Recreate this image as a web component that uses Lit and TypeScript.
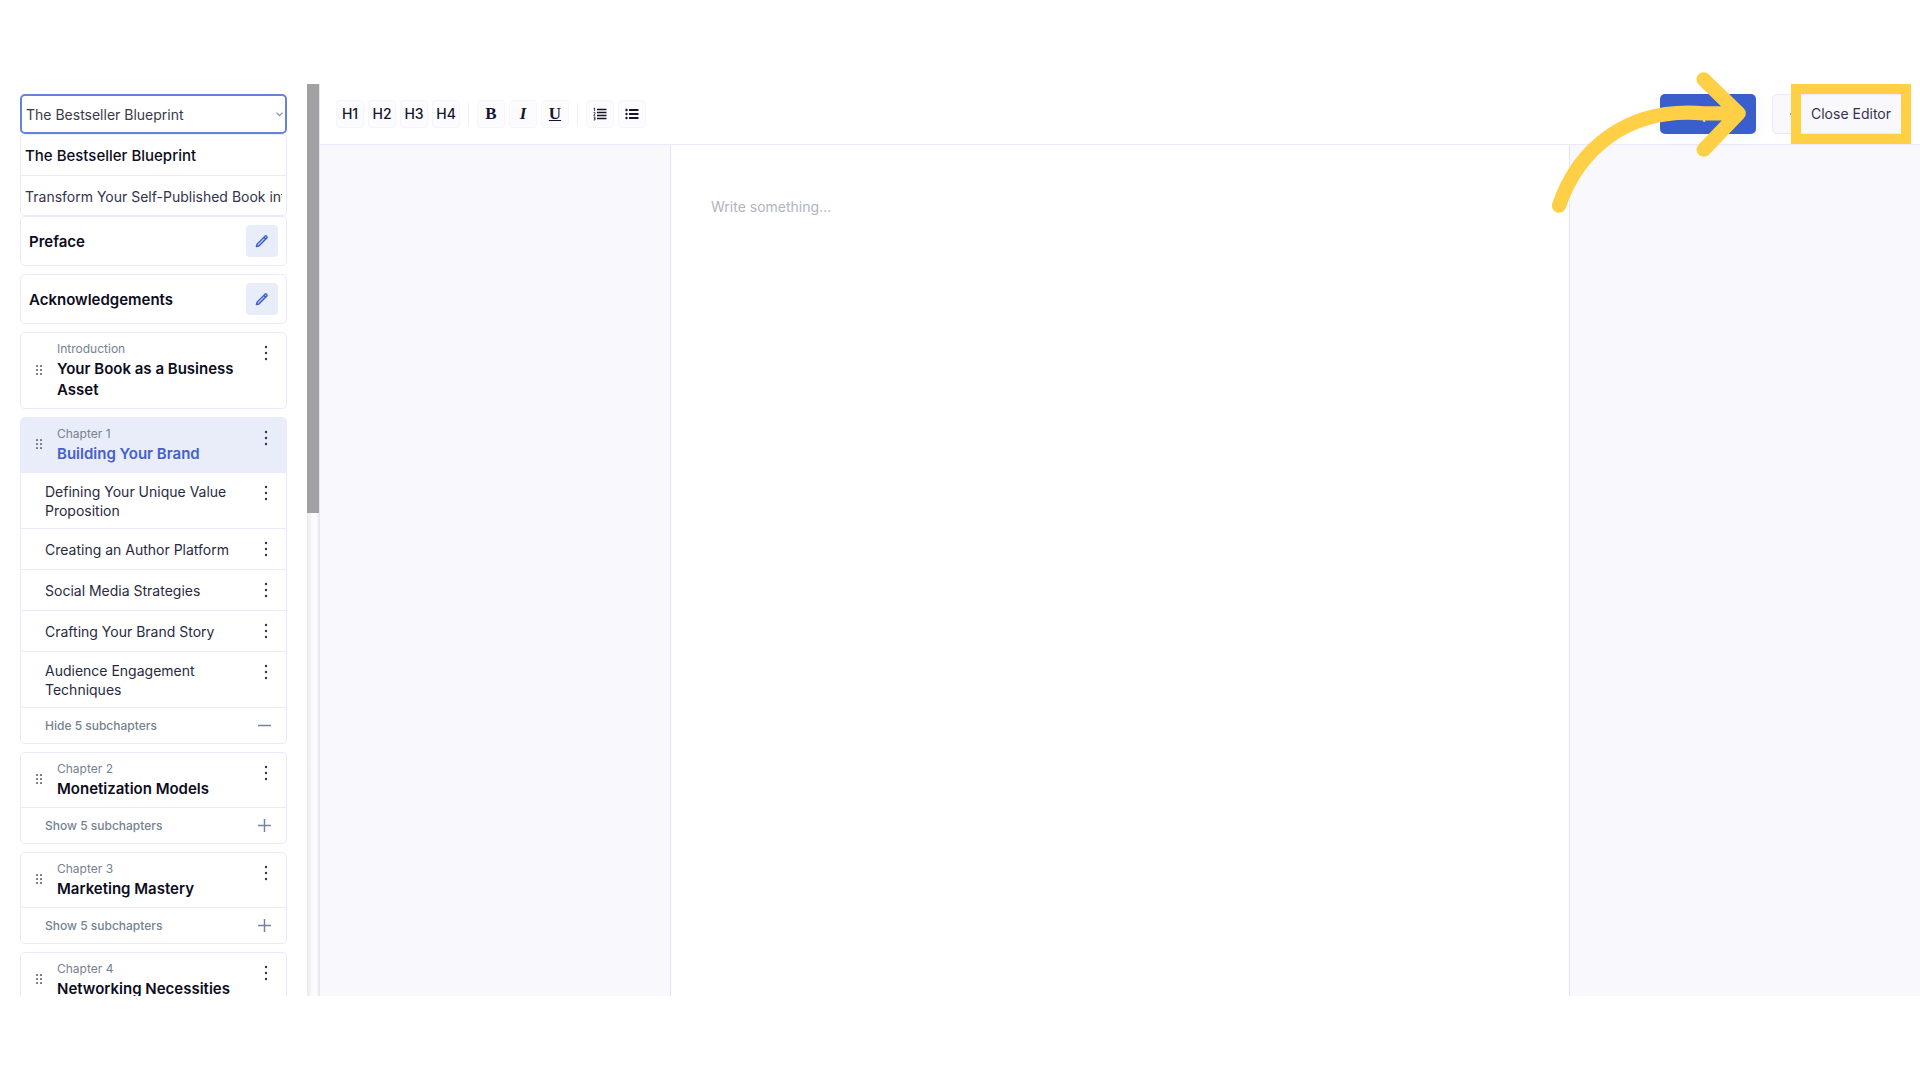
import { LitElement, html, css, svg, nothing } from "lit";
import { customElement, state } from "lit/decorators.js";

interface Chapter {
  label: string;
  title: string;
  subchapters: string[];
  count: number;
  open?: boolean;
}

const CHAPTERS: Chapter[] = [
  { label: "Introduction", title: "Your Book as a Business Asset", subchapters: [], count: 0 },
  {
    label: "Chapter 1",
    title: "Building Your Brand",
    subchapters: [
      "Defining Your Unique Value Proposition",
      "Creating an Author Platform",
      "Social Media Strategies",
      "Crafting Your Brand Story",
      "Audience Engagement Techniques",
    ],
    count: 5,
    open: true,
  },
  { label: "Chapter 2", title: "Monetization Models", subchapters: [], count: 5 },
  { label: "Chapter 3", title: "Marketing Mastery", subchapters: [], count: 5 },
  { label: "Chapter 4", title: "Networking Necessities", subchapters: [], count: 5 },
];

const TITLES = ["The Bestseller Blueprint", "Transform Your Self-Published Book into"];

const pencilIcon = html`<svg width="14" height="14" viewBox="0 0 14 14" aria-hidden="true">
  <path d="M1.300 12.700l.7-2.600 8-8a1 1 0 0 1 1.400 0l.5.5a1 1 0 0 1 0 1.400l-8 8zM8.800 3.300l1.900 1.900"
    fill="#3a5bcc" fill-opacity=".3" stroke="#3a5bcc" stroke-width="1.300" stroke-linejoin="round" />
</svg>`;

const dotsIcon = html`<svg width="4" height="16" viewBox="0 0 4 16" aria-hidden="true" fill="#33334a">
  <circle cx="2" cy="2" r="1.2" /><circle cx="2" cy="8" r="1.2" /><circle cx="2" cy="14" r="1.2" />
</svg>`;

const gripIcon = html`<svg class="grip" width="8" height="12" viewBox="0 0 8 12" aria-hidden="true" fill="#7b7b88">
  ${[2, 6, 10].map((y) => svg`<rect x="1" y=${y - 1} width="2" height="2" rx=".6" /><rect x="5" y=${y - 1} width="2" height="2" rx=".6" />`)}
</svg>`;

const orderedIcon = html`<svg width="14" height="14" viewBox="0 0 14 14" aria-hidden="true" fill="none" stroke="#15152b">
  <path d="M4 2.500h9.500M4 5.500h9.500M4 8.500h9.500M4 11.500h9.500" stroke-width="1.500" />
  <path d="M.6 1.700L1.600 1v3.200M.6 5.600h1.400v1.200L.7 8.300h1.500M.6 10h1.400v3H.6M1 11.500h1" stroke-width=".8" />
</svg>`;

const bulletIcon = html`<svg width="14" height="14" viewBox="0 0 14 14" aria-hidden="true" fill="#15152b">
  <path d="M4 3h9.500M4 7h9.500M4 11h9.500" stroke="#15152b" stroke-width="2" />
  <circle cx="1.500" cy="3" r="1.200" /><circle cx="1.500" cy="7" r="1.200" /><circle cx="1.500" cy="11" r="1.200" />
</svg>`;

@customElement("app-root")
export class AppRoot extends LitElement {
  @state() private chapters = CHAPTERS;

  static styles = css`
    :host {
      display: block;
      box-sizing: border-box;
      min-height: 100vh;
      padding: 84px 0;
      background: #fff;
      color: #15152b;
      font-family: Inter, "Liberation Sans", sans-serif;
      font-size: 14px;
      line-height: 20px;
      --line: #ebe9fb;
      --blue: #3a5fcd;
      --mark: #ffd045;
    }
    *, *::before, *::after { box-sizing: border-box; }
    button, select, textarea { font: inherit; color: inherit; margin: 0; }
    button { padding: 0; border: 0; background: none; cursor: pointer; }
    ul, h2, p { margin: 0; padding: 0; list-style: none; }
    svg { display: block; }

    .shell {
      position: relative;
      display: flex;
      height: calc(100vh - 168px);
    }
    .sidebar {
      flex: none;
      width: 307px;
      padding: 10px 20px 0;
      overflow: hidden;
    }
    .track {
      flex: none;
      width: 12px;
      background: linear-gradient(90deg, #e9e9e9, #fafafa 40%, #fdfdfd 75%, #ececec);
    }
    .thumb { height: 47%; background: #a1a1a1; }

    .picker { display: grid; align-items: center; }
    .picker > * { grid-area: 1 / 1; }
    .picker select {
      height: 40px;
      width: 100%;
      padding: 2px 20px 0 4px;
      appearance: none;
      border: 2px solid #6484db;
      border-radius: 5px;
      background: #fff;
      color: #3a3a4c;
      outline: none;
    }
    .chevron { justify-self: end; margin-right: 4px; pointer-events: none; }
    .options, .card {
      border: 1px solid var(--line);
      border-radius: 5px;
      background: #fff;
      overflow: hidden;
    }
    .option {
      display: block;
      width: 100%;
      height: 40px;
      padding: 2px 4px 0;
      text-align: left;
      color: #33334a;
    }
    .option span { display: block; white-space: nowrap; overflow: hidden; }
    .option.chosen { font-size: 15px; font-weight: 500; color: #0c0c20; }
    .options li + li { border-top: 1px solid var(--line); }
    .options { height: 82px; }

    .stack { display: grid; gap: 8px; }
    .page-row {
      display: flex;
      align-items: center;
      justify-content: space-between;
      height: 48px;
      padding: 0 8px;
    }
    h2 { font-size: 15px; font-weight: 600; line-height: 21px; color: #0c0c20; }
    .edit {
      display: grid;
      place-items: center;
      width: 32px;
      height: 32px;
      border-radius: 4px;
      background: #e9edf9;
    }
    .head {
      display: grid;
      grid-template-columns: 36px 1fr 40px;
      align-items: center;
      padding: 6px 0 8px;
    }
    .head.active { background: #e9edf9; }
    .head.active h2 { color: #4460cc; }
    .grip { margin-left: 14px; }
    .label { font-size: 12px; line-height: 19px; color: #74828f; }
    .more {
      align-self: start;
      display: grid;
      justify-items: center;
      width: 40px;
      padding-top: 6px;
    }
    .sub {
      display: grid;
      grid-template-columns: 1fr 40px;
      padding: 9px 0 8px 24px;
      border-top: 1px solid var(--line);
      line-height: 19px;
      color: #2a2a3e;
    }
    .sub.single { padding: 11px 0 10px 24px; }
    .sub .more { padding-top: 3px; }
    .sub.single .more { padding-top: 1px; }
    .toggle {
      display: flex;
      align-items: center;
      justify-content: space-between;
      width: 100%;
      height: 36px;
      padding: 0 15px 0 24px;
      border-top: 1px solid var(--line);
      font-size: 12px;
      font-weight: 500;
      color: #74828f;
    }

    .main {
      flex: 1;
      min-width: 0;
      display: flex;
      flex-direction: column;
      border-left: 1px solid #e6e5f2;
      background: #f8f8fd;
    }
    .bar {
      flex: none;
      display: flex;
      align-items: center;
      justify-content: space-between;
      height: 61px;
      padding: 0 16px;
      border-bottom: 1px solid var(--line);
      background: #fff;
    }
    .tools, .actions { display: flex; align-items: center; gap: 4px; }
    .actions { gap: 16px; }
    .tool {
      display: grid;
      place-items: center;
      width: 28px;
      height: 28px;
      border: 1px solid #f6f5fc;
      border-radius: 4px;
      background: #fcfcfe;
      font-weight: 500;
    }
    .serif { font-family: "Liberation Serif", serif; font-size: 17px; font-weight: 700; }
    .italic { font-style: italic; }
    .underline { text-decoration: underline; }
    .rule { width: 1px; height: 22px; margin: 0 4px; background: #f1f0fa; }
    .export {
      width: 96px;
      height: 40px;
      border-radius: 5px;
      background: var(--blue);
      color: #fff;
      font-weight: 500;
      box-shadow: 0 4px 20px rgba(58, 95, 205, 0.05);
    }
    .close {
      display: flex;
      align-items: center;
      gap: 10px;
      height: 40px;
      padding: 0 12px 0 16px;
      border: 1px solid var(--line);
      border-radius: 5px;
      background: #f8f8fd;
      color: #33334a;
    }
    .paper {
      flex: 1;
      width: 100%;
      max-width: 900px;
      margin: 0 auto;
      padding: 52px 40px;
      border: 0 solid #e4e2f5;
      border-width: 0 1px;
      background: #fff;
      resize: none;
      outline: none;
    }
    .paper::placeholder { color: #aeb6be; }

    /* Walkthrough marker laid over the toolbar */
    .frame {
      position: absolute;
      top: 0;
      right: 9px;
      width: 120px;
      height: 60px;
      border: 10px solid var(--mark);
      pointer-events: none;
    }
    .pointer {
      position: absolute;
      top: -24px;
      right: 167px;
      pointer-events: none;
    }
  `;

  private toggle(index: number) {
    this.chapters = this.chapters.map((c, i) => (i === index ? { ...c, open: !c.open } : c));
  }

  private renderPage(title: string) {
    return html`<section class="card">
      <div class="page-row">
        <h2>${title}</h2>
        <button class="edit" aria-label="Edit ${title}">${pencilIcon}</button>
      </div>
    </section>`;
  }

  private renderChapter(c: Chapter, index: number) {
    return html`<section class="card">
      <div class="head ${c.open ? "active" : ""}">
        ${gripIcon}
        <div>
          <p class="label">${c.label}</p>
          <h2>${c.title}</h2>
        </div>
        <button class="more" aria-label="Options for ${c.title}">${dotsIcon}</button>
      </div>
      ${c.open
        ? c.subchapters.map(
            (s) => html`<div class="sub ${s.length < 30 ? "single" : ""}">
              <span>${s}</span>
              <button class="more" aria-label="Options for ${s}">${dotsIcon}</button>
            </div>`
          )
        : nothing}
      ${c.count
        ? html`<button class="toggle" @click=${() => this.toggle(index)}>
            <span>${c.open ? "Hide" : "Show"} ${c.count} subchapters</span>
            <svg width="13" height="13" viewBox="0 0 13 13" aria-hidden="true">
              <path d=${c.open ? "M0 6.5h13" : "M0 6.5h13M6.5 0v13"} stroke="#74849a" stroke-width="1.500" />
            </svg>
          </button>`
        : nothing}
    </section>`;
  }

  render() {
    return html`<div class="shell">
      <aside class="sidebar">
        <div class="picker">
          <select aria-label="Book title">
            ${TITLES.map((t) => html`<option>${t}</option>`)}
          </select>
          <svg class="chevron" width="7" height="5" viewBox="0 0 7 5" aria-hidden="true">
            <path d="M.5.7l3 3 3-3" fill="none" stroke="#8a8a92" stroke-width="1.200" />
          </svg>
        </div>
        <ul class="options">
          ${TITLES.map((t, i) => html`<li><button class="option ${i === 0 ? "chosen" : ""}"><span>${t}</span></button></li>`)}
        </ul>
        <div class="stack">
          ${this.renderPage("Preface")} ${this.renderPage("Acknowledgements")}
          ${this.chapters.map((c, i) => this.renderChapter(c, i))}
        </div>
      </aside>
      <div class="track"><div class="thumb"></div></div>
      <main class="main">
        <header class="bar">
          <div class="tools">
            ${[1, 2, 3, 4].map((n) => html`<button class="tool">H${n}</button>`)}
            <span class="rule"></span>
            <button class="tool serif">B</button>
            <button class="tool serif italic">I</button>
            <button class="tool serif underline">U</button>
            <span class="rule"></span>
            <button class="tool" aria-label="Numbered list">${orderedIcon}</button>
            <button class="tool" aria-label="Bulleted list">${bulletIcon}</button>
          </div>
          <div class="actions">
            <button class="export">Export</button>
            <button class="close">
              <svg width="12" height="12" viewBox="0 0 12 12" aria-hidden="true">
                <path d="M2 6h9M6 2L2 6l4 4" fill="none" stroke="#33334a" stroke-width="1.300" />
              </svg>
              Close Editor
            </button>
          </div>
        </header>
        <textarea class="paper" aria-label="Chapter text" placeholder="Write something..."></textarea>
      </main>
      <div class="frame"></div>
      <svg class="pointer" width="210" height="160" viewBox="0 0 630 480" aria-hidden="true">
        <path d="M48 437C105 270 250 140 482 160H582M482 58L587 160L482 269" fill="none" stroke="#ffd045"
          stroke-width="43" stroke-linecap="round" stroke-linejoin="round" />
      </svg>
    </div>`;
  }
}
